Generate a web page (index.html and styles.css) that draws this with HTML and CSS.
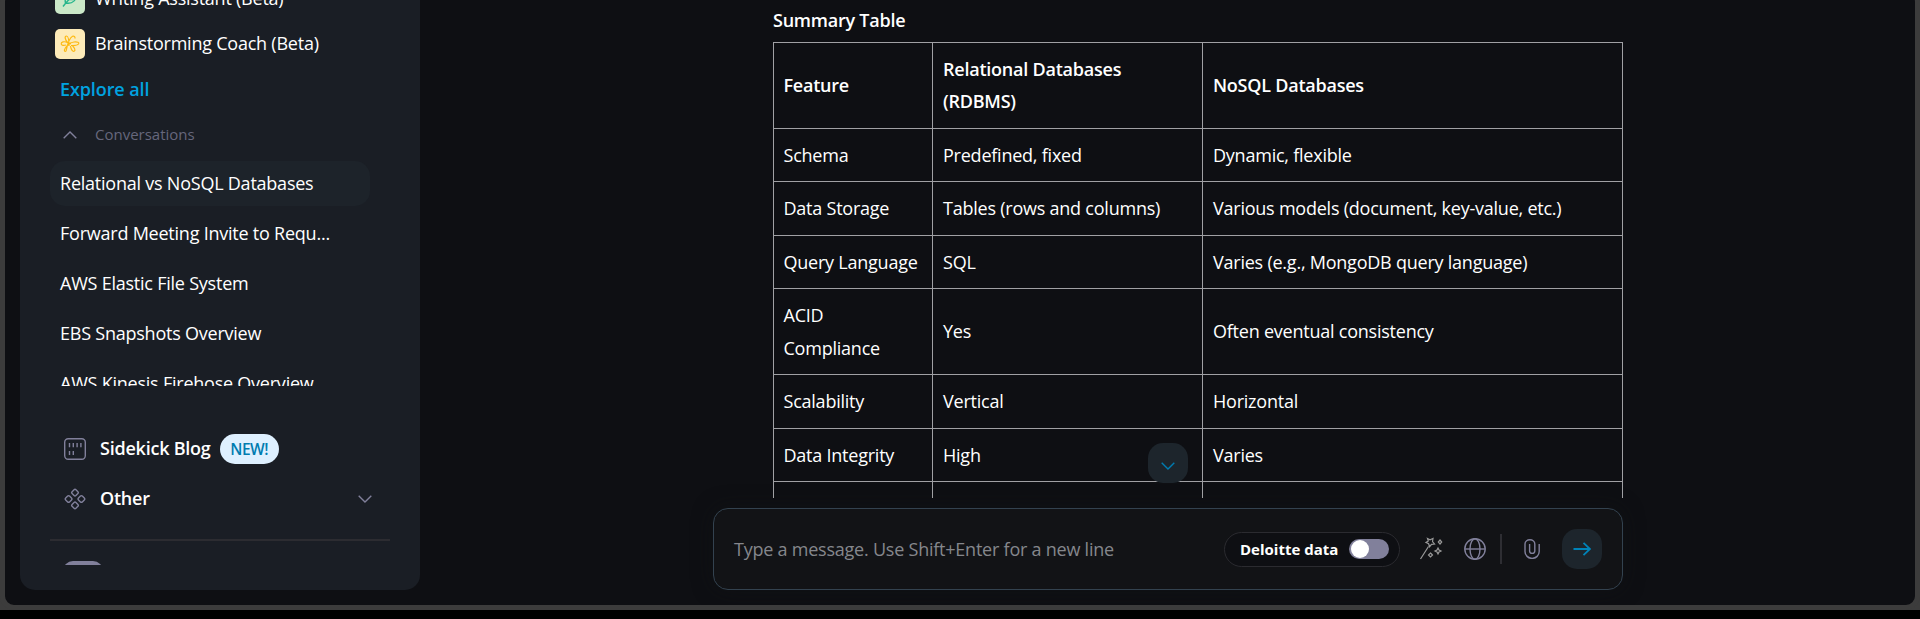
FILE: index.html
```html
<!DOCTYPE html>
<html lang="en">
<head>
<meta charset="utf-8">
<title>Sidekick</title>
<link rel="stylesheet" href="styles.css">
</head>
<body>
<div class="app">
  <aside class="sidebar">
    <div class="sidebar-scroll">
      <div class="assistant">
        <span class="assistant-icon green">
          <svg width="18" height="18" viewBox="0 0 18 18"><path d="M2 16.500 C5 12.500 8 9 13 5 M4.500 13 C3 7 7 4 16 2.500 C15.500 10 12 14.500 4.500 13 M8 9.500 V6.500 M8 9.500 H12"/></svg>
        </span>
        <span class="label">Writing Assistant (Beta)</span>
      </div>
      <div class="assistant">
        <span class="assistant-icon yellow">
          <svg width="20" height="20" viewBox="0 0 20 20"><path d="M8 9 C4.500 5.500 4.500 2 6.500 2 C8.500 2 9 5.500 9 12 M15 4.500 C15.200 2.500 14 1.800 12.500 2.300 C10 3.500 7.500 10 6 17 C5 18.500 3.500 16.500 5 14.500 C7 11.500 10 8.500 14 8 C17.500 7.600 19.500 8.500 18.500 10 C17 12 13 11.500 11 11.500 M7.500 8.500 C4 7 1 8 1.200 10 C1.400 11.500 4 11.600 6 11 M10.500 12 C11 15.500 12.500 17.800 14.200 17.200 C15.800 16.500 14.500 13.500 12.500 12"/><circle cx="10" cy="9.500" r=".5"/></svg>
        </span>
        <span class="label">Brainstorming Coach (Beta)</span>
      </div>
      <a class="explore">Explore all</a>
      <div class="section-head">
        <svg width="14" height="8" viewBox="0 0 14 8"><path d="M.7 7.200 L7 1 L13.300 7.200"/></svg>
        <span class="label">Conversations</span>
      </div>
      <div class="conversations">
        <div class="conversation active">Relational vs NoSQL Databases</div>
        <div class="conversation">Forward Meeting Invite to Requ...</div>
        <div class="conversation">AWS Elastic File System</div>
        <div class="conversation">EBS Snapshots Overview</div>
        <div class="conversation">AWS Kinesis Firehose Overview</div>
      </div>
    </div>
    <nav class="sidebar-nav">
      <div class="nav-item">
        <svg width="22" height="22" viewBox="0 0 22 22"><rect x=".7" y=".7" width="20.600" height="20.600" rx="3.500"/><path d="M5.500 5 V9.200 M9.300 5 V9.200 M13.100 5 V9.200 M16.900 5 V9.200 M5.500 13 V17 M9.300 13 V17"/></svg>
        <span class="label">Sidekick Blog</span>
        <span class="badge">NEW!</span>
      </div>
      <div class="nav-item">
        <svg width="22" height="22" viewBox="0 0 22 22"><g><rect x="-2.700" y="-2.700" width="5.400" height="5.400" rx="1.300" transform="translate(11 4.600) rotate(45)"/><rect x="-2.700" y="-2.700" width="5.400" height="5.400" rx="1.300" transform="translate(4.600 11) rotate(45)"/><rect x="-2.700" y="-2.700" width="5.400" height="5.400" rx="1.300" transform="translate(17.400 11) rotate(45)"/><rect x="-2.700" y="-2.700" width="5.400" height="5.400" rx="1.300" transform="translate(11 17.400) rotate(45)"/></g></svg>
        <span class="label">Other</span>
        <svg class="nav-chevron" width="14" height="8" viewBox="0 0 14 8"><path d="M.7 .8 L7 7 L13.300 .8"/></svg>
      </div>
    </nav>
    <div class="sidebar-foot"><span class="switch"></span></div>
  </aside>
  <main class="chat">
    <section class="messages">
      <h2 class="title">Summary Table</h2>
      <table class="summary">
        <colgroup><col class="c1"><col class="c2"><col class="c3"></colgroup>
        <tr><th>Feature</th><th>Relational Databases (RDBMS)</th><th>NoSQL Databases</th></tr>
        <tr><td>Schema</td><td>Predefined, fixed</td><td>Dynamic, flexible</td></tr>
        <tr><td>Data Storage</td><td>Tables (rows and columns)</td><td>Various models (document, key-value, etc.)</td></tr>
        <tr><td>Query Language</td><td>SQL</td><td>Varies (e.g., MongoDB query language)</td></tr>
        <tr><td>ACID Compliance</td><td>Yes</td><td>Often eventual consistency</td></tr>
        <tr><td>Scalability</td><td>Vertical</td><td>Horizontal</td></tr>
        <tr><td>Data Integrity</td><td>High</td><td>Varies</td></tr>
        <tr><td>&nbsp;</td><td></td><td></td></tr>
      </table>
      <button class="scroll-down" aria-label="Scroll down"><svg width="14" height="8" viewBox="0 0 14 8"><path d="M.7 .8 L7 7 L13.300 .8"/></svg></button>
    </section>
    <form class="composer">
      <span class="placeholder">Type a message. Use Shift+Enter for a new line</span>
      <div class="data-toggle"><span>Deloitte data</span><span class="switch"><i></i></span></div>
      <svg class="wand" width="24" height="24" viewBox="0 0 24 24"><path d="M1.500 22 L9.500 9.500 M8.500 1.500 L11 2.800 L14 1.500 L13.500 4.500 L15.500 7 L12.500 7.300 L10.600 9.700 L9.600 6.700 L7 5.500 L9.300 4 Z M21 3 L22.700 5 L21 7 L19.300 5 Z M19 11 L20 13 L22 14 L20 15 L19 17 L18 15 L16 14 L18 13 Z M11.500 16 L13.500 18 L11.500 20 L9.500 18 Z"/></svg>
      <svg class="globe" width="22" height="22" viewBox="0 0 22 22"><circle cx="11" cy="11" r="10.200"/><ellipse cx="11" cy="11" rx="5" ry="10.200"/><path d="M.8 11 H21.200"/></svg>
      <span class="divider"></span>
      <svg class="clip" width="16" height="20" viewBox="0 0 16 20"><path d="M15.200 5 V12.500 A7 6.800 0 0 1 1 12.500 V5 A4.900 4.300 0 0 1 10.800 5 V12 A2.600 2.400 0 0 1 5.600 12 V5"/></svg>
      <button class="send" type="button" aria-label="Send"><svg width="18" height="14" viewBox="0 0 18 14"><path d="M.5 7 H17 M10.500 .8 L17 7 L10.500 13.200"/></svg></button>
    </form>
  </main>
</div>
</body>
</html>
```
FILE: styles.css
```css
* { box-sizing: border-box; }
body {
  margin: 0;
  height: 619px;
  overflow: hidden;
  background: #000;
  color: #fff;
  font-family: "Open Sans", "Noto Sans", sans-serif;
  font-size: 18px;
  letter-spacing: -0.23px;
}
svg { display: block; flex: none; fill: none; stroke: #81809b; stroke-width: 1.4; }
button { border: 0; padding: 0; display: flex; align-items: center; justify-content: center; }
.app {
  height: 610px;
  display: flex;
  background: #0e0f13;
  border: solid #3c3c3c;
  border-width: 0 5px 5px;
  padding: 0 0 15px 15px;
  position: relative;
}
.app::after {
  content: "";
  position: absolute;
  inset: -12px -5px -5px;
  border: 5px solid #3c3c3c;
  border-radius: 14px;
  pointer-events: none;
}
.sidebar {
  width: 400px;
  height: 590px;
  flex: none;
  padding: 0 30px;
  background: #1a1e25;
  border-radius: 0 0 15px 15px;
}
.sidebar-scroll { height: 386px; overflow: hidden; }
.label { padding-bottom: 2px; }
.assistant { display: flex; align-items: center; gap: 10px; height: 30px; margin: 0 0 15px 5px; }
.assistant:first-child { margin-top: -16px; }
.assistant-icon { width: 30px; height: 30px; border-radius: 5px; display: grid; place-items: center; }
.green { background: #cbe8c8; }
.green svg { stroke: #26b58b; }
.yellow { background: #fdebb9; }
.yellow svg { stroke: #fdb913; stroke-width: 1.2; }
.explore { display: block; margin-left: 10px; height: 30px; line-height: 30px; font-weight: 600; letter-spacing: -0.1px; color: #00a3e0; }
.section-head { display: flex; align-items: center; height: 30px; margin: 16px 0 11px 13px; gap: 18px; font-size: 15px; letter-spacing: 0; color: #66677c; }
.conversations { display: flex; flex-direction: column; gap: 5px; width: 320px; }
.conversation { height: 45px; padding-left: 10px; line-height: 45px; border-radius: 15px; white-space: nowrap; flex: none; }
.active { background: #1d232a; }
.sidebar-nav { padding: 43px 18px 0 14px; height: 153px; }
.nav-item { display: flex; align-items: center; height: 40px; margin-bottom: 10px; gap: 14px; font-weight: 600; }
.badge { width: 59px; height: 30px; margin-left: -5px; border-radius: 15px; background: #def0ff; color: #007cb0; font-size: 15.5px; font-weight: 600; line-height: 31px; letter-spacing: -0.5px; text-align: center; }
.nav-chevron { margin-left: auto; }
.sidebar-foot { height: 26px; overflow: hidden; border-top: 2px solid #2c2c31; padding: 20px 0 0 12.5px; }
.switch { display: block; width: 40px; height: 20px; border-radius: 10px; background: #81809b; padding: 1px 2px; }
.switch i { display: block; width: 18px; height: 18px; border-radius: 9px; background: #fff; }
.chat { width: 910px; margin-left: 293px; }
.messages { height: 498px; overflow: hidden; padding-left: 60px; position: relative; }
.title { margin: 4px 0 5.95px; font-size: 18px; line-height: 32px; font-weight: 600; }
.summary { width: 850px; table-layout: fixed; border-collapse: collapse; line-height: 32.45px; }
.summary th, .summary td { border: 1px solid #a0a0a4; padding: 10px; text-align: left; font-weight: 400; }
.summary th { font-weight: 600; }
.summary tr > :first-child { padding-left: 9.5px; }
.c1 { width: 159px; }
.c2 { width: 270px; }
.scroll-down { position: absolute; left: 435px; top: 443px; width: 40px; height: 40px; border-radius: 15px; background: #1d252c; }
.scroll-down svg { stroke: #007cb0; margin-top: 5px; }
.composer {
  display: flex;
  align-items: center;
  height: 82px;
  margin-top: 10px;
  padding: 0 20px;
  border: 1px solid #33424f;
  border-radius: 15px;
  background: #121316;
  box-shadow: 0 0 20px #12131680;
}
.placeholder { flex: 1; color: #85878c; }
.data-toggle { display: flex; align-items: center; justify-content: space-between; width: 176px; height: 35px; padding: 0 10px 0 15px; border: 1px solid #2b2b30; border-radius: 18px; background: #0e0f13; font-size: 15px; font-weight: 700; letter-spacing: 0; }
.wand { margin-left: 19px; stroke: #9a9a9a; stroke-width: 1.2; }
.globe { margin-left: 21px; }
.divider { width: 2px; height: 30px; margin: 0 22px 0 14px; background: #2e2e33; }
.clip { margin-right: 22px; }
.send { width: 40px; height: 40px; border-radius: 15px; background: #1d252c; }
.send svg { stroke: #0083b8; stroke-width: 1.8; }
```
